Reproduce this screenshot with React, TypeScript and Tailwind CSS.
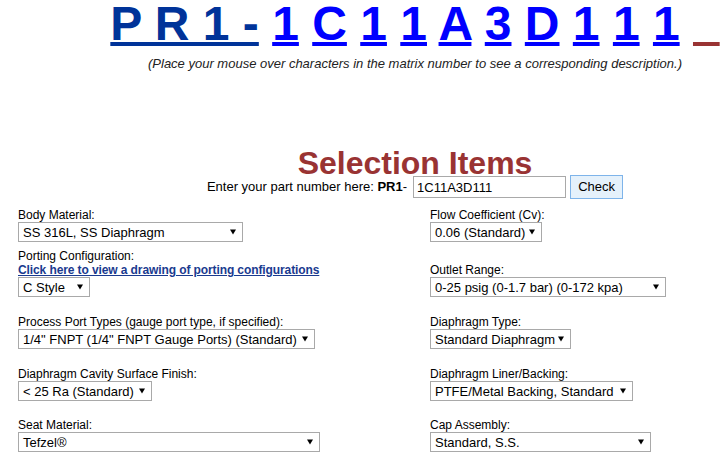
import type { ReactNode } from "react";

const FONT = "font-['Liberation_Sans',Arial,Helvetica,sans-serif]";

function Arrow() {
  return (
    <svg
      width="6"
      height="6"
      viewBox="0 0 6 6"
      className="absolute right-[6px] top-1/2 -translate-y-1/2"
    >
      <path d="M0 0.5 H6 L3 5.5 Z" fill="#000" />
    </svg>
  );
}

function FakeSelect({ value, width }: { value: string; width: string }) {
  return (
    <div
      className={`relative flex h-[20px] items-center border border-[#a9a9a9] bg-white pl-[4px] text-[13px] leading-[15px] text-black ${width}`}
    >
      <span className="whitespace-nowrap">{value}</span>
      <Arrow />
    </div>
  );
}

function Field({ label, children }: { label: string; children: ReactNode }) {
  return (
    <div className="flex flex-col items-start">
      <span className="text-[12px] leading-[14px] text-black">{label}</span>
      {children}
    </div>
  );
}

const matrix = ["1", "C", "1", "1", "A", "3", "D", "1", "1", "1"];

export default function App() {
  return (
    <div className={`h-[463px] w-[727px] overflow-hidden bg-white ${FONT}`}>
      <div className="w-[830px]">
        {/* matrix number */}
        <div className="whitespace-nowrap text-center text-[48px] font-bold leading-[48px]">
          <a className="text-[#003399] underline decoration-[4px] underline-offset-[2px]">P R 1 -</a>
          {matrix.map((ch, i) => (
            <span key={i}>
              {" "}
              <a className="text-[#0000ff] underline decoration-[4px] underline-offset-[2px]">{ch}</a>
            </span>
          ))}{" "}
          <a className="text-[#993333] underline decoration-[4px] underline-offset-[2px]">{"\u00a0\u00a0"}</a>
        </div>
        <p className="mt-[8px] text-center text-[13px] italic leading-[15px] text-[#222]">
          (Place your mouse over characters in the matrix number to see a corresponding description.)
        </p>

        <h1 className="mt-[80px] text-center text-[32px] font-bold leading-[24px] text-[#993333]">
          Selection Items
        </h1>

        <div className="flex h-[24px] items-center justify-center text-[13px] text-black">
          <span className="whitespace-nowrap">
            Enter your part number here: <b>PR1</b>-
          </span>
          <input
            defaultValue="1C11A3D111"
            className="ml-[6px] h-[22px] w-[153px] border border-[#a9a9a9] px-[3px] text-[13px] outline-none"
          />
          <button className="ml-[4px] h-[24px] w-[53px] border border-[#7eb4ea] bg-[#e5f1fb] text-[13px] text-black">
            Check
          </button>
        </div>

        {/* option fields */}
        <div className="mt-[9px] pl-[18px]">
          <div className="grid grid-cols-[412px_auto] items-end">
            <Field label="Body Material:">
              <FakeSelect value="SS 316L, SS Diaphragm" width="w-[225px]" />
            </Field>
            <Field label="Flow Coefficient (Cv):">
              <FakeSelect value="0.06 (Standard)" width="w-[112px]" />
            </Field>
          </div>

          <div className="mt-[7px] grid grid-cols-[412px_auto] items-end">
            <div className="flex flex-col items-start">
              <span className="text-[12px] leading-[14px] text-black">Porting Configuration:</span>
              <a className="text-[12px] font-bold leading-[14px] tracking-[-0.1px] text-[#1a3a8f] underline">
                Click here to view a drawing of porting configurations
              </a>
              <FakeSelect value="C Style" width="w-[72px]" />
            </div>
            <Field label="Outlet Range:">
              <FakeSelect value="0-25 psig (0-1.7 bar) (0-172 kpa)" width="w-[236px]" />
            </Field>
          </div>

          <div className="mt-[18px] grid grid-cols-[412px_auto] items-end">
            <Field label="Process Port Types (gauge port type, if specified):">
              <FakeSelect value='1/4" FNPT (1/4" FNPT Gauge Ports) (Standard)' width="w-[297px]" />
            </Field>
            <Field label="Diaphragm Type:">
              <FakeSelect value="Standard Diaphragm" width="w-[141px]" />
            </Field>
          </div>

          <div className="mt-[18px] grid grid-cols-[412px_auto] items-end">
            <Field label="Diaphragm Cavity Surface Finish:">
              <FakeSelect value="< 25 Ra (Standard)" width="w-[134px]" />
            </Field>
            <Field label="Diaphragm Liner/Backing:">
              <FakeSelect value="PTFE/Metal Backing, Standard" width="w-[203px]" />
            </Field>
          </div>

          <div className="mt-[17px] grid grid-cols-[412px_auto] items-end">
            <Field label="Seat Material:">
              <FakeSelect value="Tefzel®" width="w-[302px]" />
            </Field>
            <Field label="Cap Assembly:">
              <FakeSelect value="Standard, S.S." width="w-[221px]" />
            </Field>
          </div>
        </div>
      </div>
    </div>
  );
}
